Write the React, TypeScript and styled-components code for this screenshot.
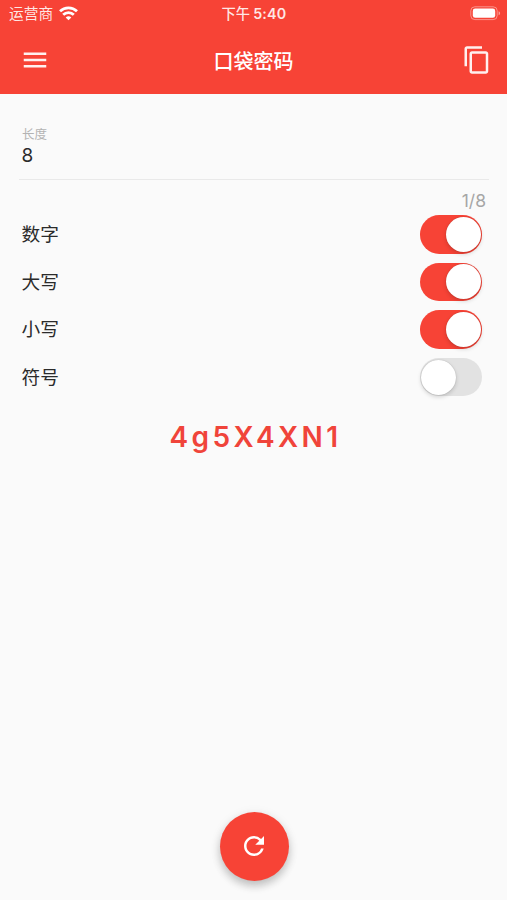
import React, { useState } from 'react';
import styled, { createGlobalStyle } from 'styled-components';
import { MdMenu, MdContentCopy, MdRefresh } from 'react-icons/md';

const RED = '#f74336';

const GlobalStyle = createGlobalStyle`
  * { box-sizing: border-box; }
  body {
    margin: 0;
    background: #fafafa;
    font-family: Inter, "Noto Sans CJK SC", sans-serif;
    color: #2b2b2b;
  }
  button { font: inherit; border: 0; padding: 0; cursor: pointer; }
`;

const Screen = styled.div`
  display: flex;
  flex-direction: column;
  height: 900px;
  overflow: hidden;
`;

const Header = styled.header`
  height: 93.5px;
  flex: none;
  background: ${RED};
  color: #fff;
`;

const StatusBar = styled.div`
  display: grid;
  grid-template-columns: 1fr auto 1fr;
  align-items: center;
  height: 27px;
  padding: 0 6px 0 9px;
  font-size: 14.7px;
  line-height: 27px;
  color: rgba(255, 255, 255, 0.88);
`;

const Carrier = styled.div`
  display: flex;
  align-items: center;
  gap: 6px;
`;

const CarrierName = styled.span`
  padding-top: 2px;
  line-height: 25px;
`;

const Clock = styled.div`
  display: flex;
  gap: 3px;
  margin-left: -2px;
  font-size: 14.3px;
  font-weight: 500;
`;

const Time = styled.span`
  font-weight: 600;
  letter-spacing: 0.2px;
`;

const Battery = styled.svg`
  justify-self: end;
`;

const AppBar = styled.div`
  display: grid;
  grid-template-columns: 1fr auto 1fr;
  align-items: center;
  height: 66px;
  padding: 0 15px 0 20px;
`;

const Title = styled.h1`
  margin: 0 0 0 -5px;
  padding-top: 3px;
  font-size: 20px;
  line-height: 30px;
  font-weight: 500;
`;

const IconButton = styled.button<{ $end?: boolean }>`
  display: flex;
  justify-self: ${(p) => (p.$end ? 'end' : 'start')};
  background: none;
  color: rgba(255, 255, 255, 0.92);
`;

const Content = styled.main`
  flex: 1;
  display: flex;
  flex-direction: column;
  padding: 32.5px 18px 0 19px;
`;

const Field = styled.label`
  display: flex;
  flex-direction: column;
  height: 54px;
  padding: 0 3px;
  border-bottom: 1px solid #e9e9e9;
`;

const FieldLabel = styled.span`
  height: 17px;
  font-size: 12.5px;
  line-height: 17px;
  color: #b3b3b3;
`;

const FieldValue = styled.span`
  margin-left: -0.5px;
  font-size: 19px;
  line-height: 25px;
`;

const Counter = styled.div`
  height: 35px;
  padding: 8px 3px 0 0;
  text-align: right;
  font-size: 17.5px;
  line-height: 25px;
  color: #a6a6a6;
`;

const Options = styled.div`
  margin-top: -4.5px;
`;

const Option = styled.div`
  display: flex;
  align-items: center;
  justify-content: space-between;
  height: 47.6px;
  padding: 0 7px 0 2.5px;
  font-size: 18.7px;
  line-height: 28px;
`;

const OptionLabel = styled.span`
  padding-top: 2px;
`;

const Track = styled.button<{ $on: boolean }>`
  display: flex;
  align-items: center;
  justify-content: ${(p) => (p.$on ? 'flex-end' : 'flex-start')};
  width: 62.5px;
  height: 38.5px;
  padding: 0 1.5px;
  border-radius: 19.25px;
  background: ${(p) => (p.$on ? RED : '#e2e2e2')};
`;

const Thumb = styled.span`
  width: 35px;
  height: 35px;
  border-radius: 50%;
  background: #fff;
  box-shadow: 0 2px 4px rgba(0, 0, 0, 0.16), 0 0 1px rgba(0, 0, 0, 0.25);
`;

const Password = styled.output`
  margin-top: 18px;
  padding-left: 3px;
  text-align: center;
  font-size: 28px;
  line-height: 36px;
  font-weight: 600;
  letter-spacing: 3.4px;
  color: #f0443a;
`;

const RefreshButton = styled.button`
  display: flex;
  align-items: center;
  justify-content: center;
  align-self: center;
  width: 69px;
  height: 69px;
  margin: auto 0 19.5px;
  border-radius: 50%;
  background: ${RED};
  color: #fff;
  box-shadow: 0 5px 9px rgba(0, 0, 0, 0.2), 0 2px 12px rgba(0, 0, 0, 0.08);
`;

const WifiIcon = () => (
  <svg width="19" height="15" viewBox="0 0 19 15" fill="none" stroke="#fff" strokeWidth="2.8">
    <path d="M1 5.3a12.2 12.2 0 0 1 17 0" />
    <path d="M4.2 8.8a7.6 7.6 0 0 1 10.6 0" />
    <path d="M9.5 14.3 6.7 11.5a4 4 0 0 1 5.6 0z" fill="#fff" stroke="none" />
  </svg>
);

const BatteryIcon = () => (
  <Battery width="31" height="15" viewBox="0 0 31 15">
    <rect x="0.8" y="0.8" width="26.4" height="12.8" rx="4" fill="none" stroke="#fff" strokeOpacity="0.42" />
    <rect x="2.8" y="2.6" width="22.4" height="9.2" rx="2.4" fill="#fff" />
    <path d="M28.6 5.2c2 .8 2 3.2 0 4z" fill="#fff" fillOpacity="0.5" />
  </Battery>
);

const initialOptions = [
  { label: '数字', on: true },
  { label: '大写', on: true },
  { label: '小写', on: true },
  { label: '符号', on: false },
];

export default function App() {
  const [options, setOptions] = useState(initialOptions);
  const toggle = (label: string) =>
    setOptions((all) => all.map((o) => (o.label === label ? { ...o, on: !o.on } : o)));

  return (
    <Screen>
      <GlobalStyle />
      <Header>
        <StatusBar>
          <Carrier>
            <CarrierName>运营商</CarrierName>
            <WifiIcon />
          </Carrier>
          <Clock>
            下午<Time>5:40</Time>
          </Clock>
          <BatteryIcon />
        </StatusBar>
        <AppBar>
          <IconButton aria-label="菜单">
            <MdMenu size={30} />
          </IconButton>
          <Title>口袋密码</Title>
          <IconButton $end aria-label="复制">
            <MdContentCopy size={30} />
          </IconButton>
        </AppBar>
      </Header>
      <Content>
        <Field>
          <FieldLabel>长度</FieldLabel>
          <FieldValue>8</FieldValue>
        </Field>
        <Counter>1/8</Counter>
        <Options>
          {options.map((o) => (
            <Option key={o.label}>
              <OptionLabel>{o.label}</OptionLabel>
              <Track $on={o.on} role="switch" aria-checked={o.on} aria-label={o.label} onClick={() => toggle(o.label)}>
                <Thumb />
              </Track>
            </Option>
          ))}
        </Options>
        <Password>4g5X4XN1</Password>
        <RefreshButton aria-label="刷新">
          <MdRefresh size={30} />
        </RefreshButton>
      </Content>
    </Screen>
  );
}
